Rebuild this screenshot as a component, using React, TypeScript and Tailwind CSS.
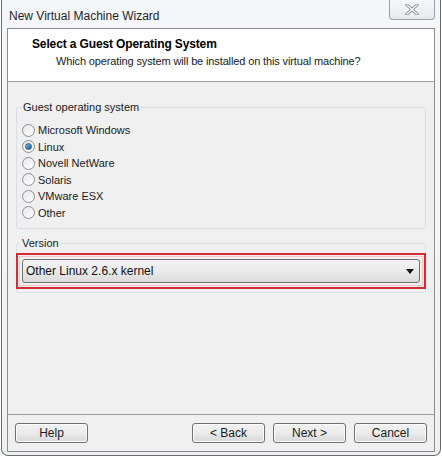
import React from 'react';

const osList = ['Microsoft Windows', 'Linux', 'Novell NetWare', 'Solaris', 'VMware ESX', 'Other'];

const Radio: React.FC<{ checked?: boolean }> = ({ checked }) => (
    <span className="w-[13px] h-[13px] rounded-full border border-[#8e8f8f] bg-gradient-to-br from-[#e6e6e6] to-[#ffffff] flex items-center justify-center flex-shrink-0">
        {checked && (
            <span className="w-[7px] h-[7px] rounded-full bg-gradient-to-br from-[#7bc0e8] to-[#1b4f7e] border border-[#2c5c88]" />
        )}
    </span>
);

const WinButton: React.FC<{ label: string }> = ({ label }) => (
    <button className="w-[73px] h-[20px] rounded-[3px] border border-[#707070] bg-gradient-to-b from-[#f2f2f2] via-[#ebebeb] to-[#d8d8d8] text-[12px] text-[#1a1a1a] leading-none flex items-center justify-center shadow-[inset_0_0_0_1px_#fcfcfc]">
        {label}
    </button>
);

export default function App() {
    return (
        <div className="w-[442px] h-[457px] bg-white overflow-hidden font-['Liberation_Sans',Arial,sans-serif]">
            {/* Window frame */}
            <div className="relative ml-[1px] w-[440px] h-[456px] border-l border-r border-b border-[#6b6b6b] rounded-b-[7px] bg-gradient-to-b from-[#f4f7fa] via-[#f3f5f7] to-[#eef1f4] px-[5px] flex flex-col">
                {/* Title bar */}
                <div className="h-[28px] flex items-center pt-[3px] pl-[2px] text-[12px] text-[#1e1e1e]">
                    New Virtual Machine Wizard
                </div>
                <div className="absolute top-0 right-[5px] w-[46px] h-[20px] rounded-b-[4px] border border-t-0 border-[#9aa1a8] bg-gradient-to-b from-[#f6f7f8] to-[#e7eaed] flex items-center justify-center">
                    <svg width="14" height="11" viewBox="0 0 14 11">
                        <path d="M2 1 L12 10 M12 1 L2 10" stroke="#7d838a" strokeWidth="3" strokeLinecap="round" />
                        <path d="M2 1 L12 10 M12 1 L2 10" stroke="#ffffff" strokeWidth="1.2" strokeLinecap="round" />
                    </svg>
                </div>

                {/* Client area */}
                <div className="flex-1 mb-[3px] border border-[#8c8c8c] bg-[#f0f0f0] flex flex-col">
                    {/* Header */}
                    <div className="h-[53px] bg-white border-b border-[#a0a0a0] pt-[8px]">
                        <div className="pl-[24px] text-[12px] font-bold tracking-[-0.13px] text-[#000] leading-[15px]">
                            Select a Guest Operating System
                        </div>
                        <div className="pl-[48px] pt-[3px] text-[11px] tracking-[-0.13px] text-[#1a1a1a] leading-[13px]">
                            Which operating system will be installed on this virtual machine?
                        </div>
                    </div>

                    {/* Body */}
                    <div className="flex-1 px-[8px] pt-[18px] flex flex-col">
                        <fieldset className="border border-[#d5dfe5] rounded-[3px] pt-[8px] pb-[7px] px-[5px]">
                            <legend className="px-[1px] text-[11px] text-[#1a1a1a] leading-[14px]">
                                Guest operating system
                            </legend>
                            {osList.map((os, i) => (
                                <div key={os} className="h-[16.5px] flex items-center gap-[3px] text-[11px] text-[#1a1a1a]">
                                    <Radio checked={i === 1} />
                                    <span>{os}</span>
                                </div>
                            ))}
                        </fieldset>

                        <fieldset className="mt-[7px] border border-[#d5dfe5] rounded-[3px] pt-[3px] pb-[3px]">
                            <legend className="ml-[3px] px-[2px] text-[11px] text-[#1a1a1a] leading-[14px]">
                                Version
                            </legend>
                            <div className="-mx-[1px] border-2 border-[#d42b34] p-[1px]">
                                <div className="border border-[#f4c4c6] px-[2px] py-[2px]">
                                    <div className="h-[24px] rounded-[3px] border border-[#707070] bg-gradient-to-b from-[#f3f3f3] via-[#ebebeb] to-[#dadada] flex items-center justify-between pl-[3px] pr-[5px] text-[12px] text-[#111]">
                                        <span>Other Linux 2.6.x kernel</span>
                                        <svg width="8" height="5" viewBox="0 0 8 5">
                                            <path d="M0 0 H8 L4 5 Z" fill="#111" />
                                        </svg>
                                    </div>
                                </div>
                            </div>
                        </fieldset>

                        <div className="flex-1" />
                    </div>

                    {/* Footer */}
                    <div className="h-[37px] border-t border-[#a0a0a0] flex items-start pt-[8px] px-[7px]">
                        <WinButton label="Help" />
                        <div className="flex-1" />
                        <div className="flex gap-[8px]">
                            <WinButton label="< Back" />
                            <WinButton label="Next >" />
                            <WinButton label="Cancel" />
                        </div>
                    </div>
                </div>
            </div>
        </div>
    );
}
